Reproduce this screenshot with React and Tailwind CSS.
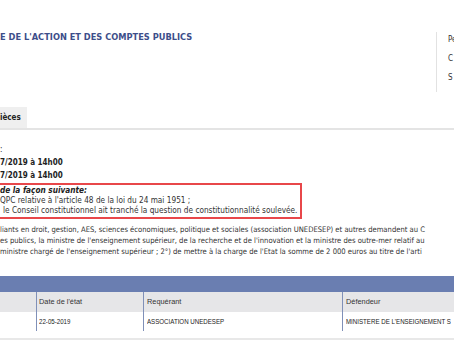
export default function App() {
  const f = { fontFamily: '"DejaVu Sans Condensed", "DejaVu Sans", Tahoma, sans-serif' };
  const a = { fontFamily: '"Liberation Sans", Arial, sans-serif' };
  return (
    <div className="relative h-[341px] w-[454px] overflow-hidden bg-white text-[#222]" style={f}>
      {/* header */}
      <div className="flex h-[100px]">
        <div className="flex-1 pt-[32px]">
          <div className="whitespace-nowrap text-[9.2px] font-bold leading-[10px] text-[#3d4e8a]">
            E DE L'ACTION ET DES COMPTES PUBLICS
          </div>
        </div>
        <div className="mt-[32px] flex h-[60px] w-[18px] flex-col gap-[8px] overflow-hidden border-l border-[#e2e2e2] pl-[11px] pt-[2px] text-[8px] leading-[11px] text-[#333]">
          <span className="whitespace-nowrap">Pe</span>
          <span>C</span>
          <span>S</span>
        </div>
      </div>
      {/* tabs */}
      <div className="mt-[8px] flex h-[22px] items-end border-b-2 border-[#e4e4e4]">
        <div className="flex h-[21px] w-[27px] items-center bg-[#efefef] text-[8px] font-bold text-[#222]">ièces</div>
      </div>
      {/* details */}
      <div className="mt-[13px] text-[8px] leading-[13px]">:</div>
      <div className="whitespace-nowrap text-[8px] font-bold leading-[13px]">7/2019 à 14h00</div>
      <div className="whitespace-nowrap text-[8px] font-bold leading-[13px]">7/2019 à 14h00</div>
      {/* red box */}
      <div className="mt-[1px] h-[36px] w-[302px] border-2 border-l-0 border-[#e8474a] text-[8.2px] leading-[10px]">
        <div className="whitespace-nowrap font-bold italic">de la façon suivante:</div>
        <div className="whitespace-nowrap text-[#333]">QPC relative à l'article 48 de la loi du 24 mai 1951 ;</div>
        <div className="whitespace-nowrap pl-[3px] text-[#333]">le Conseil constitutionnel ait tranché la question de constitutionnalité soulevée.</div>
      </div>
      {/* paragraph */}
      <div className="mt-[5px] text-[7.6px] leading-[11px] text-[#333]">
        <div className="whitespace-nowrap">liants en droit, gestion, AES, sciences économiques, politique et sociales (association UNEDESEP) et autres demandent au C</div>
        <div className="whitespace-nowrap">es publics, la ministre de l'enseignement supérieur, de la recherche et de l'innovation et la ministre des outre-mer relatif au</div>
        <div className="whitespace-nowrap">ministre chargé de l'enseignement supérieur ; 2°) de mettre à la charge de l'Etat la somme de 2 000 euros au titre de l'arti</div>
      </div>
      {/* table */}
      <div className="mt-[19px] h-[16px] bg-[#6a7eb1]" />
      <div className="flex h-[20px] bg-[#e6e6e8] text-[8px] text-[#333]" style={a}>
        <div className="w-[36px] shrink-0" />
        <div className="flex w-[107px] shrink-0 items-center border-l border-[#8090b8] pl-[2px]">
          <span className="inline-block origin-left scale-x-[0.92] whitespace-nowrap">Date de l'état</span>
        </div>
        <div className="flex w-[199px] shrink-0 items-center border-l border-[#8090b8] pl-[3px]">
          <span className="inline-block origin-left scale-x-[0.92] whitespace-nowrap">Requérant</span>
        </div>
        <div className="flex min-w-0 flex-1 items-center border-l border-[#8090b8] pl-[3px]">
          <span className="inline-block origin-left scale-x-[0.92] whitespace-nowrap">Défendeur</span>
        </div>
      </div>
      <div className="flex h-[19px] text-[7.5px] text-[#222]" style={a}>
        <div className="w-[36px] shrink-0" />
        <div className="flex w-[107px] shrink-0 items-center border-l border-[#8090b8] pl-[2px]">
          <span className="inline-block origin-left scale-x-[0.82] whitespace-nowrap">22-05-2019</span>
        </div>
        <div className="flex w-[199px] shrink-0 items-center border-l border-[#8090b8] pl-[3px]">
          <span className="inline-block origin-left scale-x-[0.82] whitespace-nowrap">ASSOCIATION UNEDESEP</span>
        </div>
        <div className="flex min-w-0 flex-1 items-center overflow-hidden border-l border-[#8090b8] pl-[3px]">
          <span className="inline-block origin-left scale-x-[0.82] whitespace-nowrap">MINISTERE DE L'ENSEIGNEMENT S</span>
        </div>
      </div>
      <div className="mt-[7px] h-[2px] bg-[#e8e8e8]" />
    </div>
  );
}
